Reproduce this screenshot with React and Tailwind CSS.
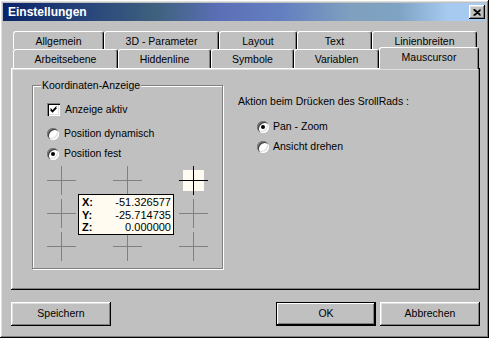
import React from "react";

const font = { fontFamily: '"Liberation Sans", Arial, sans-serif' };

const row1 = [
  { label: "Allgemein", w: "w-[91px]" },
  { label: "3D - Parameter", w: "w-[115px]" },
  { label: "Layout", w: "w-[78px]" },
  { label: "Text", w: "w-[75px]" },
  { label: "Linienbreiten", w: "w-[105px]" },
];

const row2 = [
  { label: "Arbeitsebene", w: "w-[105px]" },
  { label: "Hiddenline", w: "w-[93px]" },
  { label: "Symbole", w: "w-[83px]" },
  { label: "Variablen", w: "w-[85px]" },
];

const raised =
  "shadow-[inset_-1px_-1px_#000,inset_1px_1px_#fff,inset_-2px_-2px_#808080,inset_2px_2px_#dfdfdf]";

const Tab = ({ label, w }) => (
  <div
    className={`${w} h-full shrink-0 flex items-center justify-center pt-[2px] bg-[#c0c0c0] rounded-t-[3px] border-t border-l border-white border-r border-r-black shadow-[inset_-1px_0_#808080]`}
  >
    {label}
  </div>
);

const Radio = ({ checked }) => (
  <div className="w-[12px] h-[12px] shrink-0 rounded-full bg-white flex items-center justify-center shadow-[inset_1px_1px_#808080,inset_2px_2px_#404040,inset_-1px_-1px_#fff,inset_-2px_-2px_#dfdfdf]">
    {checked && <div className="w-[4px] h-[4px] rounded-full bg-black" />}
  </div>
);

const Cross = ({ dark }) => (
  <div className="w-[29px] h-[29px] flex items-center justify-center">
    <svg width="29" height="29" viewBox="0 0 29 29">
      {dark && <rect x="4" y="4" width="21" height="21" fill="#fffbf0" />}
      <line x1="0" y1="14.5" x2="29" y2="14.5" stroke={dark ? "#000" : "#808080"} strokeWidth="1" />
      <line x1="14.5" y1="0" x2="14.5" y2="29" stroke={dark ? "#000" : "#808080"} strokeWidth="1" />
    </svg>
  </div>
);

const Button = ({ label, def }) => (
  <div
    className={`w-[100px] h-[24px] flex items-center justify-center bg-[#c0c0c0] ${
      def
        ? "border border-black shadow-[inset_-1px_-1px_#000,inset_1px_1px_#fff,inset_-2px_-2px_#808080]"
        : raised
    }`}
  >
    {label}
  </div>
);

export default function App() {
  return (
    <div
      className={`w-[489px] h-[338px] bg-[#c0c0c0] p-[3px] flex flex-col text-[10.5px] text-black ${raised}`}
      style={font}
    >
      <div className="h-[18px] flex items-center justify-between pl-[5px] pr-[1px] bg-[linear-gradient(90deg,#0a246a_0%,#2c4a7c_20%,#3f627f_32%,#5c6fb8_45%,#6480c0_58%,#7fa0bf_72%,#7fa3c3_82%,#a6caf0_92%,#a6caf0_100%)]">
        <span className="text-white font-bold text-[12px]">Einstellungen</span>
        <div className={`w-[16px] h-[14px] flex items-center justify-center bg-[#c0c0c0] ${raised}`}>
          <svg width="8" height="7" viewBox="0 0 8 7">
            <path d="M0.5 0.5 L7.5 6.5 M1.5 0.5 L7.5 5.6 M0.5 6.5 L7.5 0.5 M1.5 6.5 L7.5 1.4" stroke="#000" strokeWidth="1.1" fill="none" />
          </svg>
        </div>
      </div>

      <div className="mt-[10px] pl-[10px]">
        <div className="flex h-[18px]">
          {row1.map((t) => (
            <Tab key={t.label} {...t} />
          ))}
        </div>
        <div className="flex h-[19px]">
          {row2.map((t) => (
            <Tab key={t.label} {...t} />
          ))}
          <div className="relative z-10 w-[100px] h-[22px] -mt-[2px] shrink-0 flex items-start justify-center pt-[2px] bg-[#c0c0c0] rounded-t-[3px] border-t border-l border-white border-r border-r-black shadow-[inset_-1px_0_#808080]">
            Mauscursor
          </div>
        </div>
      </div>

      <div className={`relative ml-[8px] w-[469px] h-[222px] flex pl-[21px] pt-[17px] ${raised}`}>
        <div className="relative w-[191px] h-[184px] border border-[#808080] shadow-[inset_1px_1px_#fff,1px_1px_#fff] flex flex-col pl-[14px] pt-[17px]">
          <span className="absolute -top-[7px] left-[8px] px-[1px] bg-[#c0c0c0] leading-[13px]">
            Koordinaten-Anzeige
          </span>
          <div className="flex items-center gap-[5px] h-[13px]">
            <div className="w-[13px] h-[13px] bg-white flex items-center justify-center shadow-[inset_1px_1px_#808080,inset_2px_2px_#000,inset_-1px_-1px_#fff,inset_-2px_-2px_#dfdfdf]">
              <svg width="9" height="9" viewBox="0 0 9 9">
                <path d="M1.5 3.5 L3.5 5.8 L7.5 1.5 M1.5 4.8 L3.5 7 L7.5 2.8" stroke="#000" strokeWidth="1.1" fill="none" />
              </svg>
            </div>
            <span>Anzeige aktiv</span>
          </div>
          <div className="mt-[11px] flex items-center gap-[5px] h-[13px]">
            <Radio />
            <span>Position dynamisch</span>
          </div>
          <div className="mt-[7px] flex items-center gap-[5px] h-[13px]">
            <Radio checked />
            <span>Position fest</span>
          </div>
          <div className="relative mt-[6px] grid grid-cols-[29px_29px_29px] gap-x-[37px] gap-y-[4px] w-max">
            <Cross />
            <Cross />
            <Cross dark />
            <Cross />
            <Cross />
            <Cross />
            <Cross />
            <Cross />
            <Cross />
            <div className="absolute left-[31px] top-[28px] w-[96px] h-[41px] bg-[#fffbf0] border border-black pt-[1px] pl-[3px] pr-[2px] text-[11px] leading-[12.5px]">
              {[
                ["X:", "-51.326577"],
                ["Y:", "-25.714735"],
                ["Z:", "0.000000"],
              ].map(([k, v]) => (
                <div key={k} className="flex justify-between">
                  <span className="font-bold">{k}</span>
                  <span>{v}</span>
                </div>
              ))}
            </div>
          </div>
        </div>

        <div className="ml-[15px] mt-[10px] flex flex-col">
          <div className="h-[13px] leading-[13px]">Aktion beim Drücken des SrollRads :</div>
          <div className="ml-[19px] mt-[12px] flex items-center gap-[4px] h-[13px]">
            <Radio checked />
            <span>Pan - Zoom</span>
          </div>
          <div className="ml-[19px] mt-[7px] flex items-center gap-[4px] h-[13px]">
            <Radio />
            <span>Ansicht drehen</span>
          </div>
        </div>
      </div>

      <div className="mt-[12px] ml-[8px] w-[469px] flex">
        <Button label="Speichern" />
        <div className="flex-1" />
        <Button label="OK" def />
        <div className="w-[4px]" />
        <Button label="Abbrechen" />
      </div>
    </div>
  );
}
